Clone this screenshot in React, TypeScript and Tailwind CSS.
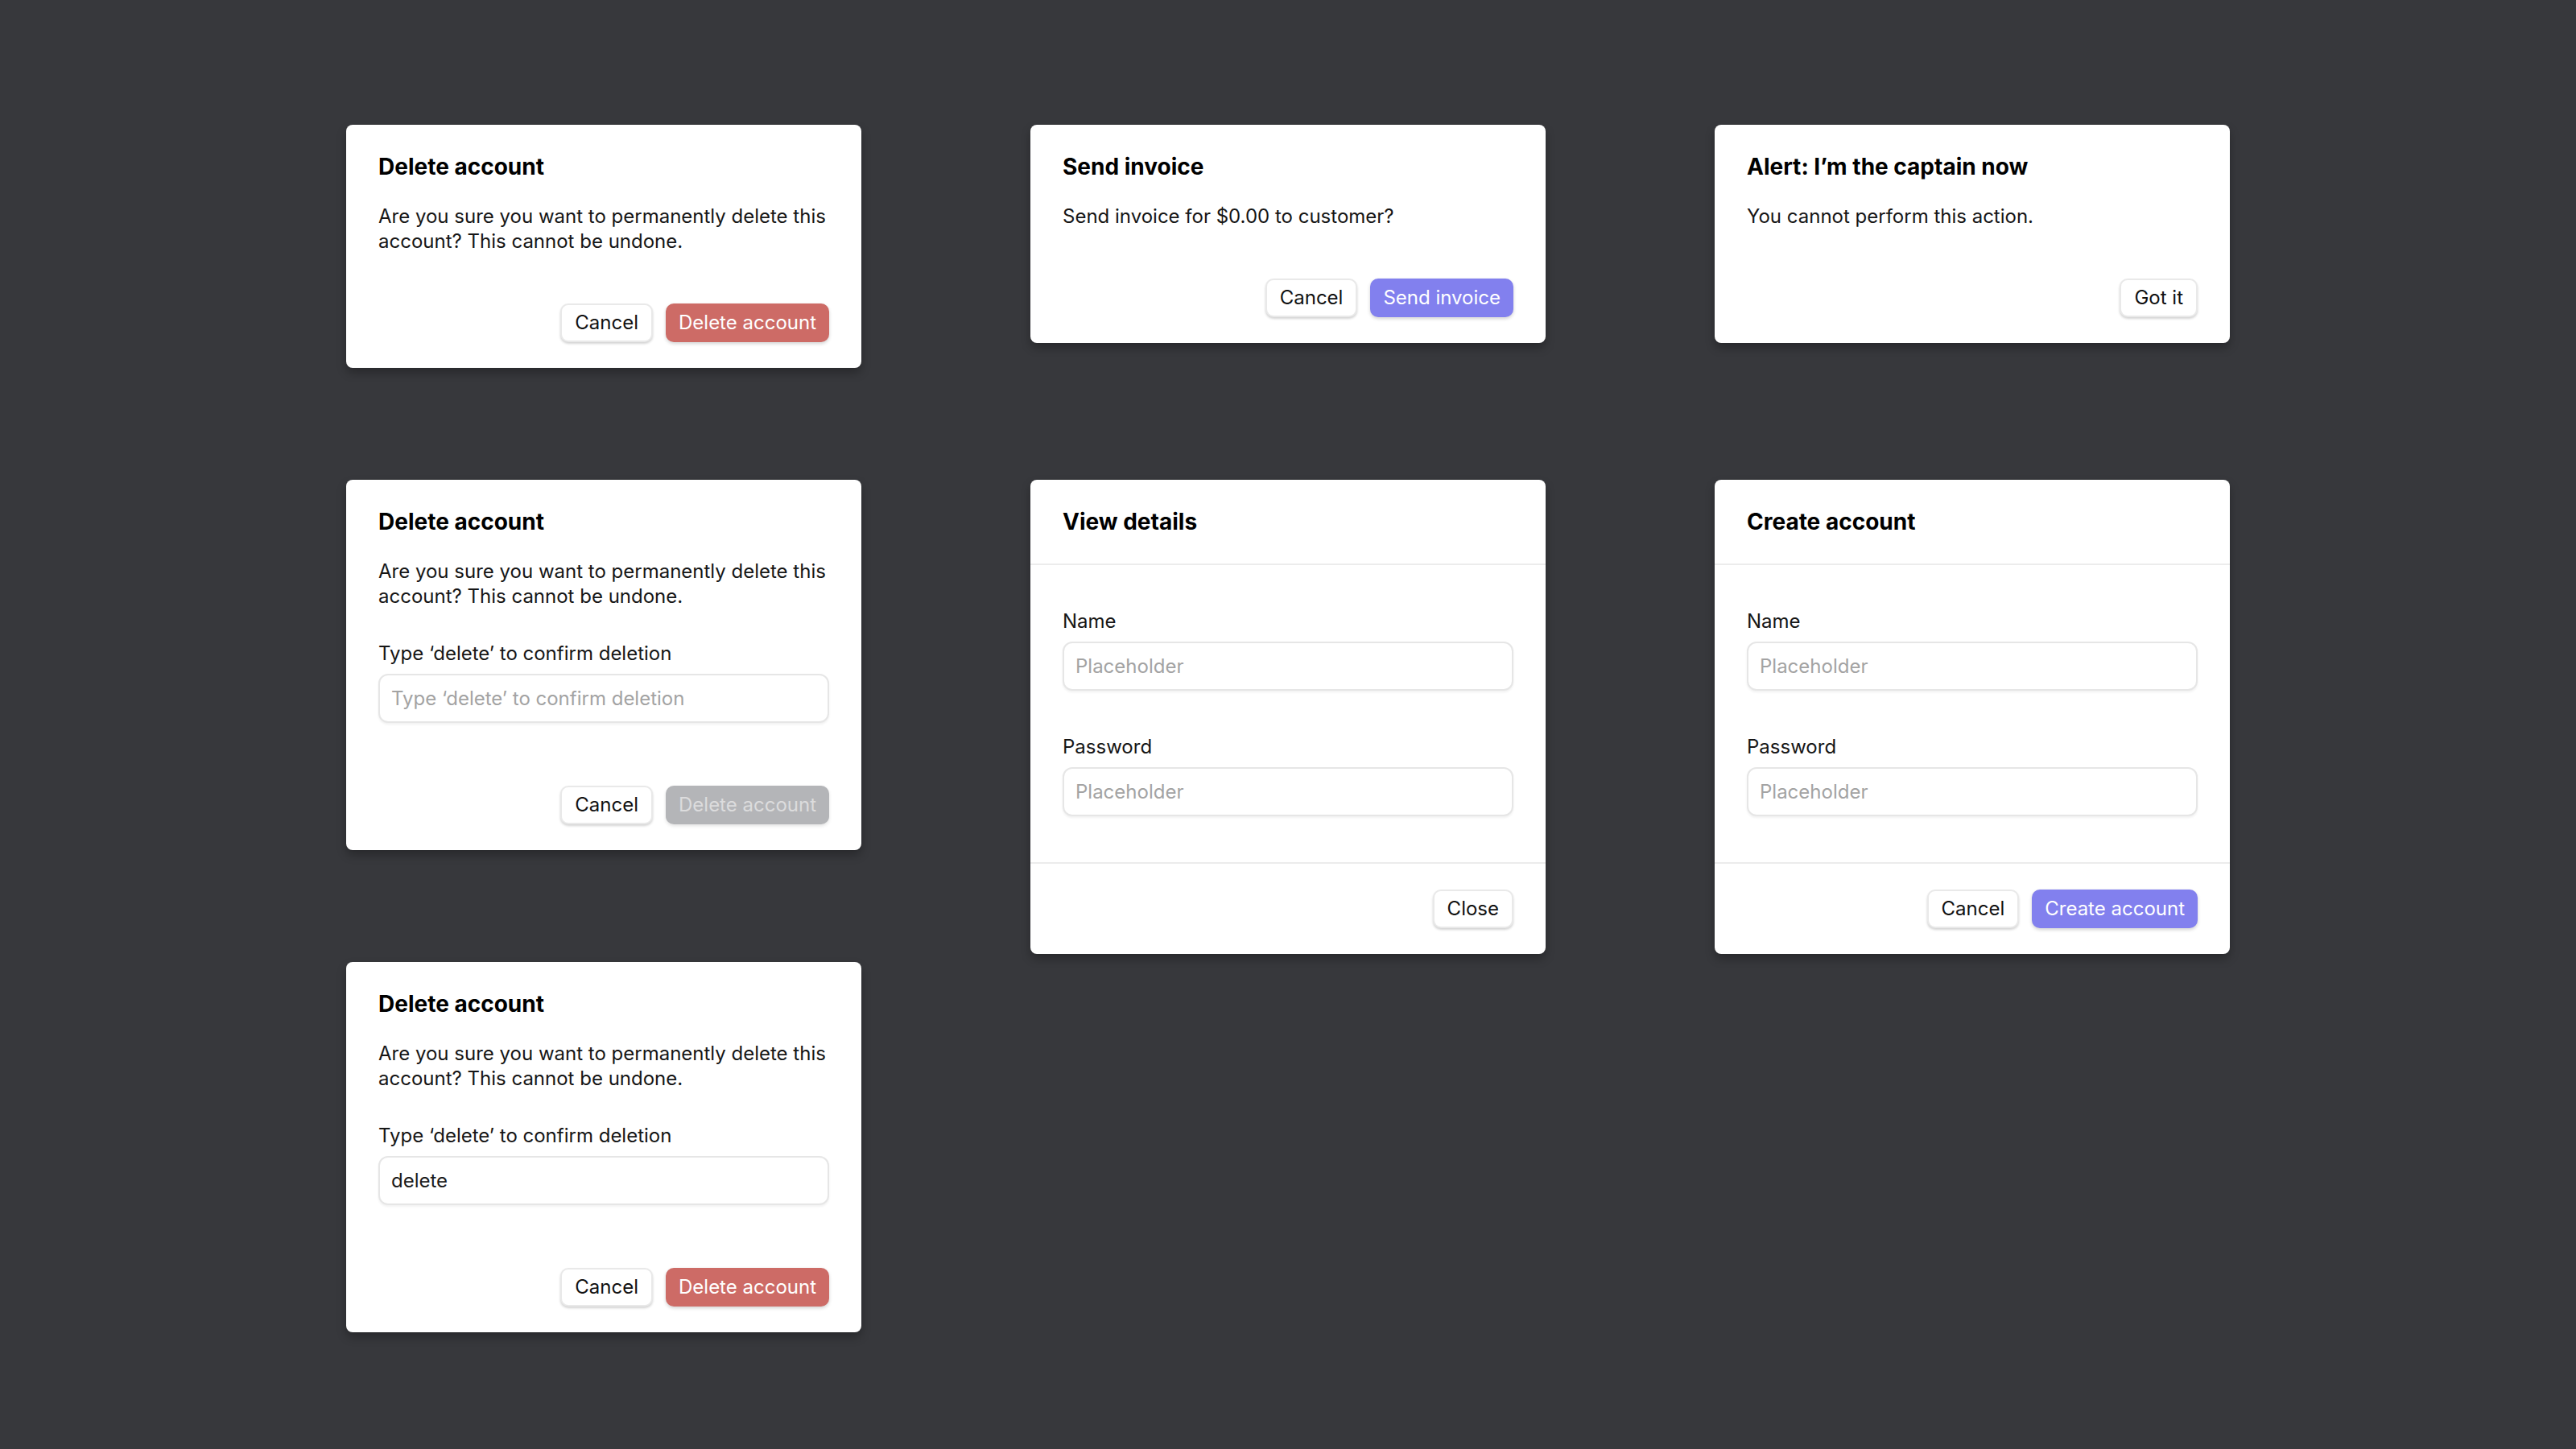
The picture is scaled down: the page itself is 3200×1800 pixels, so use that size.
import React from 'react';

type Tone = 'secondary' | 'danger' | 'primary' | 'disabled';

const toneClass: Record<Tone, string> = {
  secondary: 'bg-white text-[#111] border-2 border-[#e9e9e9] shadow-[0_2px_3px_rgba(0,0,0,0.18)]',
  danger: 'bg-[#cd6b66] text-white shadow-[0_2px_4px_rgba(0,0,0,0.18)]',
  primary: 'bg-[#8280ee] text-white shadow-[0_2px_4px_rgba(0,0,0,0.18)]',
  disabled: 'bg-[#b4b5b8] text-[#dcdcdd] shadow-[0_2px_4px_rgba(0,0,0,0.12)]',
};

const Button: React.FC<{ tone?: Tone; children: React.ReactNode }> = ({ tone = 'secondary', children }) => (
  <button
    className={`h-12 px-4 rounded-[10px] text-[24px] leading-none whitespace-nowrap ${toneClass[tone]}`}
    disabled={tone === 'disabled'}
  >
    {children}
  </button>
);

const Field: React.FC<{ placeholder?: string; value?: string }> = ({ placeholder, value }) => (
  <input
    className="w-full h-[61px] rounded-[12px] border-2 border-[#e6e6e6] px-[14px] text-[24px] text-[#1a1a1a] placeholder:text-[#a3a3a3] shadow-[0_2px_3px_rgba(0,0,0,0.06)] outline-none bg-white"
    placeholder={placeholder}
    defaultValue={value}
  />
);

const Card: React.FC<{ className?: string; children: React.ReactNode }> = ({ className = '', children }) => (
  <div className={`w-[640px] bg-white rounded-[8px] shadow-[0_6px_12px_rgba(0,0,0,0.28)] ${className}`}>{children}</div>
);

const Title: React.FC<{ children: React.ReactNode }> = ({ children }) => (
  <h2 className="text-[28px] leading-[40px] font-bold text-black whitespace-nowrap">{children}</h2>
);

// simple confirm / alert dialog
const AlertDialog: React.FC<{
  title: string;
  body: React.ReactNode;
  children?: React.ReactNode;
  footer: React.ReactNode;
}> = ({ title, body, children, footer }) => (
  <Card className="px-10 py-8">
    <Title>{title}</Title>
    <p className="mt-[26px] text-[24px] leading-[31px] text-[#161616] whitespace-nowrap">{body}</p>
    {children}
    <div className={`${children ? 'mt-[78px]' : 'mt-[62px]'} flex justify-end gap-4`}>{footer}</div>
  </Card>
);

const deleteText = (
  <>
    Are you sure you want to permanently delete this
    <br />
    account? This cannot be undone.
  </>
);

const ConfirmInput: React.FC<{ value?: string }> = ({ value }) => (
  <div className="mt-[40px] flex flex-col gap-[9px]">
    <label className="text-[24px] leading-[32px] text-[#161616]">Type ‘delete’ to confirm deletion</label>
    <Field placeholder="Type ‘delete’ to confirm deletion" value={value} />
  </div>
);

// dialog with header / body / footer sections
const FormDialog: React.FC<{ title: string; footer: React.ReactNode }> = ({ title, footer }) => (
  <Card className="row-span-2">
    <div className="px-10 py-8 border-b-2 border-[#ececec]">
      <Title>{title}</Title>
    </div>
    <div className="px-10 pt-[54px] pb-[57px] flex flex-col">
      <label className="text-[24px] leading-[32px] text-[#161616]">Name</label>
      <div className="mt-[9px]">
        <Field placeholder="Placeholder" />
      </div>
      <label className="mt-[54px] text-[24px] leading-[32px] text-[#161616]">Password</label>
      <div className="mt-[9px]">
        <Field placeholder="Placeholder" />
      </div>
    </div>
    <div className="px-10 py-8 border-t-2 border-[#ececec] flex justify-end gap-4">{footer}</div>
  </Card>
);

const App: React.FC = () => {
  return (
    <div className="w-full h-screen bg-[#37383c] flex justify-center items-start pt-[155px] font-[Inter,sans-serif] antialiased">
      <div className="grid grid-cols-[640px_640px_640px] gap-x-[210px] gap-y-[139px] items-start content-start">
        <AlertDialog
          title="Delete account"
          body={deleteText}
          footer={
            <>
              <Button>Cancel</Button>
              <Button tone="danger">Delete account</Button>
            </>
          }
        />
        <AlertDialog
          title="Send invoice"
          body="Send invoice for $0.00 to customer?"
          footer={
            <>
              <Button>Cancel</Button>
              <Button tone="primary">Send invoice</Button>
            </>
          }
        />
        <AlertDialog
          title="Alert: I’m the captain now"
          body="You cannot perform this action."
          footer={<Button>Got it</Button>}
        />

        <AlertDialog
          title="Delete account"
          body={deleteText}
          footer={
            <>
              <Button>Cancel</Button>
              <Button tone="disabled">Delete account</Button>
            </>
          }
        >
          <ConfirmInput />
        </AlertDialog>
        <FormDialog title="View details" footer={<Button>Close</Button>} />
        <FormDialog
          title="Create account"
          footer={
            <>
              <Button>Cancel</Button>
              <Button tone="primary">Create account</Button>
            </>
          }
        />

        <AlertDialog
          title="Delete account"
          body={deleteText}
          footer={
            <>
              <Button>Cancel</Button>
              <Button tone="danger">Delete account</Button>
            </>
          }
        >
          <ConfirmInput value="delete" />
        </AlertDialog>
      </div>
    </div>
  );
};

export default App;
